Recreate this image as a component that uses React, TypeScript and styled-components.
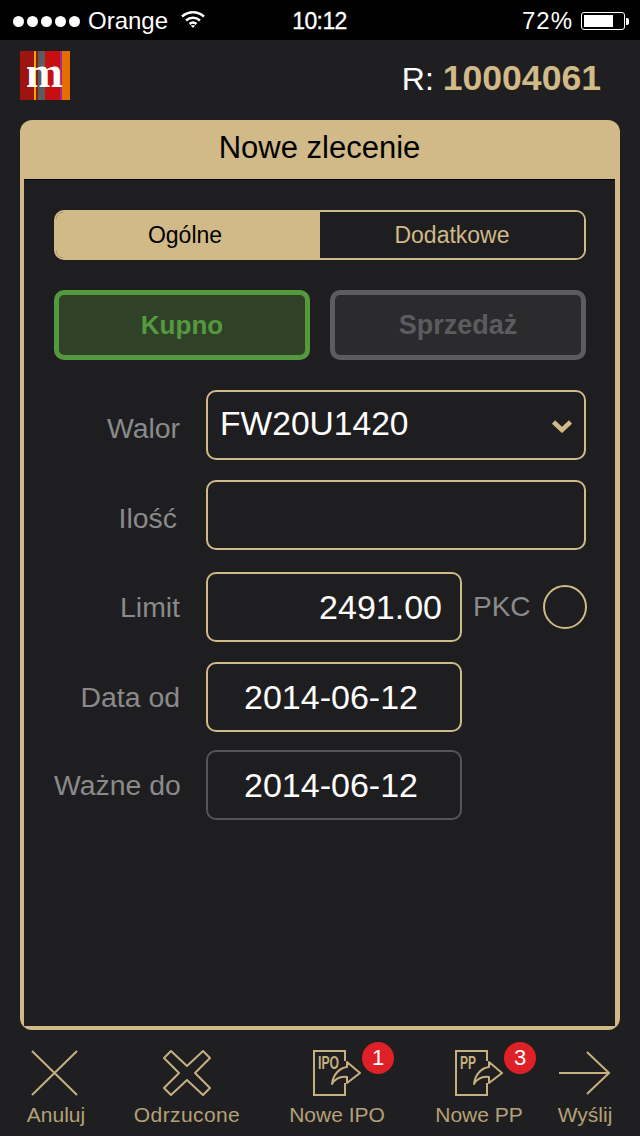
import styled, { createGlobalStyle } from 'styled-components';

const GlobalStyle = createGlobalStyle`
  html, body {
    margin: 0;
    padding: 0;
    background: #1f1f21;
    font-family: "Liberation Sans", Arial, sans-serif;
  }
`;

const TAN = '#d1b988';
const MUTED_TAN = '#b5a177';
const ICON_TAN = '#c6b07f';

const App = () => {
  return (
    <Page>
      <GlobalStyle />
      <StatusBar>
        <StatusLeft>
          <Dots>
            <Dot />
            <Dot />
            <Dot />
            <Dot />
            <Dot />
          </Dots>
          <Carrier>Orange</Carrier>
          <WifiIcon viewBox="0 0 24 18">
            <path d="M1 6.5C7.5 0.8 16.5 0.8 23 6.5" />
            <path d="M5 10.5C9.2 6.9 14.8 6.9 19 10.5" />
            <path d="M8.6 14C10.6 12.3 13.4 12.3 15.4 14" />
            <polygon points="12,18 9.8,15.3 14.2,15.3" fill="#fff" stroke="none" />
          </WifiIcon>
        </StatusLeft>
        <Clock>10:12</Clock>
        <StatusRight>
          <Percent>72%</Percent>
          <Battery>
            <BatteryFill />
          </Battery>
          <BatteryTip />
        </StatusRight>
      </StatusBar>

      <TopBar>
        <Logo>
          <Stripe $w={14} $c="#9e1510" />
          <Stripe $w={2} $c="#f0a800" />
          <Stripe $w={2} $c="#8b1a12" />
          <Stripe $w={7} $c="#5c5c5c" />
          <Stripe $w={15} $c="#c70f12" />
          <Stripe $w={2} $c="#9c2a8f" />
          <Stripe $w={8} $c="#e86c00" />
          <LogoLetter>m</LogoLetter>
        </Logo>
        <Account>
          R: <AccountNumber>10004061</AccountNumber>
        </Account>
      </TopBar>

      <Card>
        <CardTitle>Nowe zlecenie</CardTitle>
        <CardBody>
          <Tabs>
            <Tab $active>Ogólne</Tab>
            <Tab>Dodatkowe</Tab>
          </Tabs>

          <SideButtons>
            <BuyButton>Kupno</BuyButton>
            <SellButton>Sprzedaż</SellButton>
          </SideButtons>

          <Row $top={30}>
            <Label $drop={6}>Walor</Label>
            <Field $wide $lift={3}>
              FW20U1420
              <Chevron viewBox="0 0 22 14">
                <path d="M2.5 3L11 11L19.5 3" />
              </Chevron>
            </Field>
          </Row>
          <Row $top={20}>
            <Label $drop={6} $inset={3}>
              Ilość
            </Label>
            <Field $wide />
          </Row>
          <Row $top={22}>
            <Label>Limit</Label>
            <Field $align="right">2491.00</Field>
            <PkcLabel>PKC</PkcLabel>
            <Radio />
          </Row>
          <Row $top={20}>
            <Label>Data od</Label>
            <Field $align="center">2014-06-12</Field>
          </Row>
          <Row $top={18}>
            <Label>Ważne do</Label>
            <Field $align="center" $disabled>
              2014-06-12
            </Field>
          </Row>
        </CardBody>
      </Card>

      <Footer>
        <FooterItem>
          <FooterIcon viewBox="0 0 50 50">
            <path d="M3 2L48 46M48 2L3 46" />
          </FooterIcon>
          <FooterLabel $inset={4}>Anuluj</FooterLabel>
        </FooterItem>
        <FooterItem>
          <FooterIcon viewBox="0 0 50 50">
            <path d="M9 2L25 17L41 2L48 9L33 24L48 39L41 46L25 31L9 46L2 39L17 24L2 9Z" strokeLinejoin="round" />
          </FooterIcon>
          <FooterLabel $spacing={0.4}>Odrzucone</FooterLabel>
        </FooterItem>
        <FooterItem>
          <DocIcon label="IPO" textWidth={21} />
          <Badge>1</Badge>
          <FooterLabel>Nowe IPO</FooterLabel>
        </FooterItem>
        <FooterItem>
          <DocIcon label="PP" textWidth={16} />
          <Badge>3</Badge>
          <FooterLabel>Nowe PP</FooterLabel>
        </FooterItem>
        <FooterItem>
          <FooterIcon viewBox="0 0 54 50" $w={54}>
            <path d="M1 24H51M29 3L51 24L29 45" />
          </FooterIcon>
          <FooterLabel>Wyślij</FooterLabel>
        </FooterItem>
      </Footer>
    </Page>
  );
};

const DocIcon = ({ label, textWidth }: { label: string; textWidth: number }) => (
  <FooterIcon viewBox="0 0 50 50">
    <path d="M33 12V2H2V46H33V34" />
    <path d="M35 13L48 24L35 34V28C28 27 23 30 20 35C21 26 27 19 35 18Z" strokeLinejoin="round" />
    <DocLabel x="6" y="20" textLength={textWidth} lengthAdjust="spacingAndGlyphs">
      {label}
    </DocLabel>
  </FooterIcon>
);

export default App;

const Page = styled.div`
  width: 640px;
  height: 1136px;
  background: #1f1f21;
  overflow: hidden;
  display: flex;
  flex-direction: column;
`;

const StatusBar = styled.div`
  height: 40px;
  background: #000;
  color: #fff;
  font-size: 24px;
  display: grid;
  grid-template-columns: 1fr auto 1fr;
  align-items: center;
  padding: 2px 11px 0 13px;
  box-sizing: border-box;
`;

const StatusLeft = styled.div`
  display: flex;
  align-items: center;
`;

const Dots = styled.div`
  display: flex;
  gap: 3px;
  margin-right: 8px;
`;

const Dot = styled.span`
  width: 11px;
  height: 11px;
  border-radius: 50%;
  background: #fff;
`;

const Carrier = styled.span`
  font-size: 24px;
  margin-right: 13px;
`;

const WifiIcon = styled.svg`
  width: 24px;
  height: 18px;
  margin-bottom: 4px;
  fill: none;
  stroke: #fff;
  stroke-width: 2.4;
`;

const Clock = styled.span`
  font-size: 23px;
  letter-spacing: -0.6px;
  margin-right: 3px;
  -webkit-text-stroke: 0.3px #fff;
`;

const StatusRight = styled.div`
  display: flex;
  align-items: center;
  justify-content: flex-end;
`;

const Percent = styled.span`
  letter-spacing: 1px;
  margin-right: 8px;
`;

const Battery = styled.div`
  width: 44px;
  height: 18px;
  border: 1px solid #fff;
  border-radius: 3px;
  box-sizing: border-box;
  padding: 2px;
`;

const BatteryFill = styled.div`
  width: 29px;
  height: 100%;
  background: #fff;
`;

const BatteryTip = styled.div`
  width: 3px;
  height: 7px;
  background: #fff;
  margin-left: 1px;
  border-radius: 0 2px 2px 0;
`;

const TopBar = styled.div`
  height: 80px;
  display: flex;
  align-items: center;
  justify-content: space-between;
  padding: 0 39px 0 20px;
  box-sizing: border-box;
`;

const Logo = styled.div`
  position: relative;
  width: 50px;
  height: 49px;
  display: flex;
  margin-top: -9px;
`;

const Stripe = styled.span<{ $w: number; $c: string }>`
  width: ${(p) => p.$w}px;
  background: ${(p) => p.$c};
`;

const LogoLetter = styled.span`
  position: absolute;
  left: 6px;
  top: 0;
  color: #fff;
  font-family: "Liberation Serif", serif;
  font-weight: 700;
  font-size: 44px;
  line-height: 44px;
`;

const Account = styled.div`
  color: #fff;
  font-size: 32px;
  margin-top: -4px;
`;

const AccountNumber = styled.span`
  color: ${TAN};
  font-size: 35.6px;
  font-weight: 700;
`;

const Card = styled.div`
  width: 600px;
  height: 910px;
  margin-left: 20px;
  background: ${TAN};
  border-radius: 12px;
  padding: 0 5px 4px 4px;
  box-sizing: border-box;
  display: flex;
  flex-direction: column;
`;

const CardTitle = styled.div`
  height: 59px;
  line-height: 56px;
  text-align: center;
  color: #000;
  font-size: 31px;
`;

const CardBody = styled.div`
  flex: 1;
  background: #1e1e20;
  border-top: 1px solid #000;
  padding: 30px 29px 0 30px;
  box-sizing: border-box;
`;

const Tabs = styled.div`
  display: flex;
  height: 50px;
  border: 2px solid ${TAN};
  border-radius: 10px;
  overflow: hidden;
  box-sizing: border-box;
`;

const Tab = styled.div<{ $active?: boolean }>`
  flex: 0 0 50%;
  box-sizing: border-box;
  display: flex;
  align-items: center;
  justify-content: center;
  font-size: 23px;
  padding-right: ${(p) => (p.$active ? '6px' : '0')};
  background: ${(p) => (p.$active ? TAN : '#1e1e20')};
  color: ${(p) => (p.$active ? '#000' : TAN)};
`;

const SideButtons = styled.div`
  display: flex;
  gap: 20px;
  margin-top: 30px;
`;

const SideButton = styled.div`
  flex: 1;
  height: 70px;
  box-sizing: border-box;
  border-radius: 10px;
  border: 5px solid;
  display: flex;
  align-items: center;
  justify-content: center;
  font-size: 26px;
  font-weight: 700;
`;

const BuyButton = styled(SideButton)`
  background: #2f4227;
  border-color: #55993f;
  color: #55993f;
`;

const SellButton = styled(SideButton)`
  background: #2b2b2d;
  border-color: #5c5c5e;
  color: #5c5c5e;
  font-size: 27px;
`;

const Row = styled.div<{ $top: number }>`
  display: flex;
  align-items: center;
  height: 70px;
  margin-top: ${(p) => p.$top}px;
`;

const Label = styled.div<{ $drop?: number; $inset?: number }>`
  width: ${(p) => 126 - (p.$inset ?? 0)}px;
  flex-shrink: 0;
  margin-right: ${(p) => 26 + (p.$inset ?? 0)}px;
  padding-top: ${(p) => p.$drop ?? 0}px;
  text-align: right;
  font-size: 28.4px;
  color: #8a8a8a;
  white-space: nowrap;
`;

const Field = styled.div<{ $wide?: boolean; $align?: string; $disabled?: boolean; $lift?: number }>`
  position: relative;
  width: ${(p) => (p.$wide ? '380px' : '256px')};
  flex-shrink: 0;
  height: 70px;
  box-sizing: border-box;
  border: 2px solid ${(p) => (p.$disabled ? '#555557' : TAN)};
  border-radius: 10px;
  padding: 0 18px ${(p) => p.$lift ?? 0}px 12px;
  display: flex;
  align-items: center;
  justify-content: ${(p) =>
    p.$align === 'right' ? 'flex-end' : p.$align === 'center' ? 'center' : 'flex-start'};
  font-size: ${(p) => (p.$wide ? '33.6px' : '34px')};
  color: #fff;
`;

const Chevron = styled.svg`
  position: absolute;
  right: 11px;
  top: 27px;
  width: 22px;
  height: 14px;
  fill: none;
  stroke: ${TAN};
  stroke-width: 4.5;
`;

const PkcLabel = styled.div`
  margin-left: 11px;
  font-size: 28px;
  color: #8a8a8a;
`;

const Radio = styled.div`
  width: 44px;
  height: 44px;
  margin-left: 12px;
  border: 2px solid ${TAN};
  border-radius: 50%;
  box-sizing: border-box;
  flex-shrink: 0;
`;

const Footer = styled.div`
  flex: 1;
  display: grid;
  grid-template-columns: 108px 158px 142px 142px 70px;
`;

const FooterItem = styled.div`
  position: relative;
  display: flex;
  flex-direction: column;
  align-items: center;
  padding-top: 19px;
`;

const FooterLabel = styled.span<{ $inset?: number; $spacing?: number }>`
  color: ${MUTED_TAN};
  font-size: 21px;
  white-space: nowrap;
  padding-left: ${(p) => p.$inset ?? 0}px;
  letter-spacing: ${(p) => p.$spacing ?? 0}px;
`;

const FooterIcon = styled.svg<{ $w?: number }>`
  width: ${(p) => p.$w ?? 50}px;
  height: 50px;
  margin-bottom: 4px;
  flex-shrink: 0;
  fill: none;
  stroke: ${ICON_TAN};
  stroke-width: 2;
`;

const DocLabel = styled.text`
  font-family: "Liberation Sans", sans-serif;
  font-size: 19px;
  font-weight: 700;
  fill: ${ICON_TAN};
  stroke: none;
`;

const Badge = styled.span`
  position: absolute;
  top: 12px;
  left: 96px;
  width: 32px;
  height: 32px;
  border-radius: 50%;
  background: #df2027;
  color: #fff;
  font-size: 22px;
  display: flex;
  align-items: center;
  justify-content: center;
`;
